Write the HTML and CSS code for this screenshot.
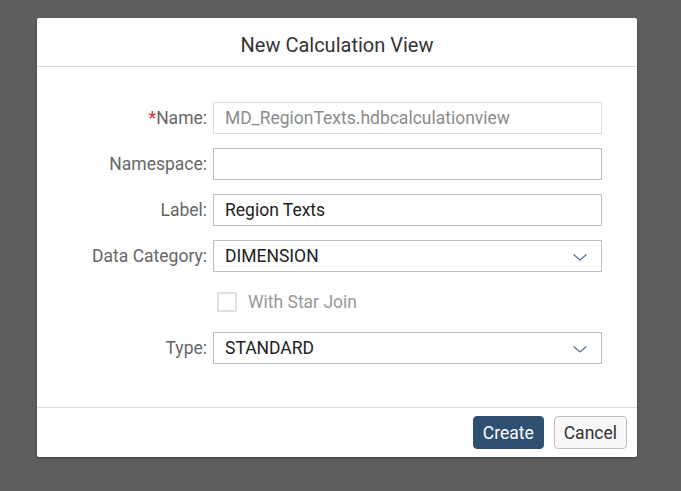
FILE: index.html
```html
<!DOCTYPE html>
<html>
<head>
<meta charset="utf-8">
<link rel="stylesheet" href="styles.css">
</head>
<body>
<div class="dialog">
  <div class="header">New Calculation View</div>
  <div class="content">
    <div class="row">
      <label class="lbl"><span class="req">*</span>Name:</label>
      <div class="input readonly">MD_RegionTexts.hdbcalculationview</div>
    </div>
    <div class="row">
      <label class="lbl">Namespace:</label>
      <div class="input"></div>
    </div>
    <div class="row">
      <label class="lbl">Label:</label>
      <div class="input">Region Texts</div>
    </div>
    <div class="row">
      <label class="lbl">Data Category:</label>
      <div class="input select">DIMENSION
        <svg class="chev" width="16" height="10" viewBox="0 0 16 10"><path d="M1.5 2.5 L8 8 L14.5 2.5" fill="none" stroke="#5a7088" stroke-width="1.2"/></svg>
      </div>
    </div>
    <div class="row">
      <span class="lbl"></span>
      <div class="check"><span class="box"></span><span class="check-text">With Star Join</span></div>
    </div>
    <div class="row">
      <label class="lbl">Type:</label>
      <div class="input select">STANDARD
        <svg class="chev" width="16" height="10" viewBox="0 0 16 10"><path d="M1.5 2.5 L8 8 L14.5 2.5" fill="none" stroke="#5a7088" stroke-width="1.2"/></svg>
      </div>
    </div>
  </div>
  <div class="footer">
    <button class="btn primary">Create</button>
    <button class="btn">Cancel</button>
  </div>
</div>
</body>
</html>
```

FILE: styles.css
```css
html, body {
  margin: 0;
  padding: 0;
}
body {
  background: #5e5e5e;
  width: 681px;
  height: 491px;
  padding: 18px 0 0 37px;
  box-sizing: border-box;
  font-family: Roboto, "Liberation Sans", sans-serif;
}
.dialog {
  width: 600px;
  height: 439px;
  background: #fff;
  border-radius: 2px;
  display: flex;
  flex-direction: column;
  box-shadow: 0 1px 3px rgba(0,0,0,0.3);
}
.header {
  height: 49px;
  box-sizing: border-box;
  border-bottom: 1px solid #d9d9d9;
  display: flex;
  align-items: center;
  justify-content: center;
  font-size: 20px;
  color: #333;
  padding-top: 5px;
}
.content {
  flex: 1;
  padding: 35px 35px 0 0;
  display: flex;
  flex-direction: column;
  gap: 14px;
}
.row {
  display: flex;
  align-items: center;
  height: 32px;
}
.lbl {
  width: 170px;
  text-align: right;
  padding-right: 6px;
  font-size: 17.5px;
  color: #666;
  flex: none;
}
.req {
  color: #d0303b;
}
.input {
  flex: 1;
  height: 32px;
  box-sizing: border-box;
  border: 1px solid #bfbfbf;
  padding: 0 11px;
  display: flex;
  align-items: center;
  font-size: 17.5px;
  color: #222;
  position: relative;
}
.input.readonly {
  border-color: #dcdcdc;
  color: #8c8c8c;
}
.select .chev {
  position: absolute;
  right: 13px;
  top: 11px;
}
.check {
  display: flex;
  align-items: center;
  padding-left: 4px;
}
.box {
  width: 16px;
  height: 16px;
  border: 2px solid #e0e0e0;
  box-sizing: content-box;
  margin-right: 11px;
}
.check-text {
  font-size: 17.5px;
  color: #999;
}
.footer {
  height: 50px;
  box-sizing: border-box;
  border-top: 1px solid #d9d9d9;
  display: flex;
  justify-content: flex-end;
  align-items: center;
  padding: 0 10px 0 0;
  gap: 10px;
}
.btn {
  height: 33px;
  font-family: Roboto, "Liberation Sans", sans-serif;
  font-size: 17.5px;
  padding: 0 9px;
  border-radius: 4px;
  border: 1px solid #bfbfbf;
  background: #f7f7f7;
  color: #333;
}
.btn.primary {
  background: #2f5070;
  border-color: #2f5070;
  color: #fff;
}
```
